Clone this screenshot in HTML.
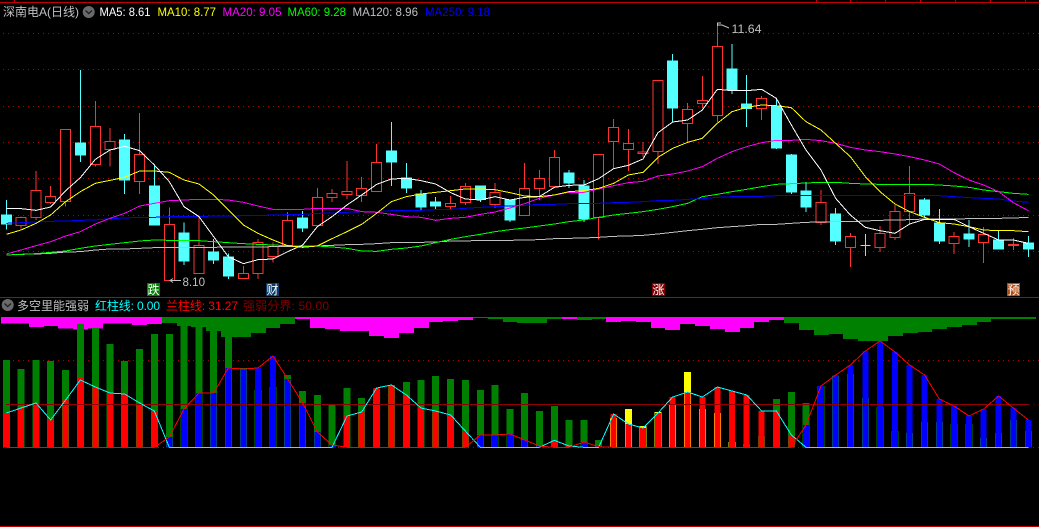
<!DOCTYPE html>
<html><head><meta charset="utf-8"><style>
html,body{margin:0;padding:0;background:#000;width:1039px;height:527px;overflow:hidden}
svg{display:block}
text{font-family:"Liberation Sans","WenQuanYi Zen Hei","Noto Sans CJK SC",sans-serif;font-size:12px}
</style></head><body>
<svg width="1039" height="527" viewBox="0 0 1039 527" xmlns="http://www.w3.org/2000/svg">
<rect width="1039" height="527" fill="#000"/>
<g shape-rendering="crispEdges">
<path d="M0 2.5H1039M0 297.5H1039M0 526.5H1039" stroke="#c00000" fill="none"/>
<path d="M14.5 0V2M816.5 0V2M850.5 0V2M885.5 0V2M920.5 0V2M955.5 0V2M990.5 0V2M1025.5 0V2" stroke="#c00000"/>
<path d="M3 33.5H1039M3 69.5H1039M3 106.5H1039M3 142.5H1039M3 178.5H1039M3 215.5H1039M3 251.5H1039M3 360.5H1039M3 447.5H1039" stroke="#b00000" stroke-dasharray="1 4" fill="none"/>
</g>
<g transform="scale(0.33333)" shape-rendering="crispEdges" stroke-width="3" fill="none">
<path stroke="#ff3232" d="M63 650V685M108 513V660M152 558V612M197 388V620M286 303V500M330 384V500M419 339V582M508 622V841M597 650V821M730 798V836M774 717V837M819 727V788M863 636V737M952 564V677M996 567V606M1041 483V597M1085 531V606M1130 432V575M1352 588V630M1396 549V615M1485 549V624M1574 489V647M1618 510V600M1663 450V559M1796 463V719M1841 357V505M1885 387V513M1929 426V470M1974 241V492M2063 309V426M2107 228V324M2152 78V366M2285 288V360M2463 570V675M2551 699V801M2640 678V756M2685 615V720M2729 498V672M2862 696V762M2951 681V789M3040 714V750"/>
<path stroke="#ff3232" fill="#000" d="M48 652h30v25h-30zM93 571h30v82h-30zM137 589h30v19h-30zM182 388h30v216h-30zM271 379h30v115h-30zM315 424h30v25h-30zM404 463h30v81h-30zM493 673h30v168h-30zM582 736h30v85h-30zM715 820h30v16h-30zM759 727h30v94h-30zM804 740h30v30h-30zM848 661h30v76h-30zM937 592h30v85h-30zM981 580h30v13h-30zM1026 574h30v10h-30zM1070 565h30v22h-30zM1115 487h30v88h-30zM1337 610h30v10h-30zM1381 559h30v49h-30zM1470 577h30v36h-30zM1559 565h30v82h-30zM1603 535h30v31h-30zM1648 472h30v87h-30zM1781 463h30v190h-30zM1826 382h30v42h-30zM1870 430h30v19h-30zM1914 456h30v4h-30zM1959 241h30v214h-30zM2048 328h30v43h-30zM2092 301h30v10h-30zM2137 139h30v208h-30zM2270 295h30v31h-30zM2448 607h30v60h-30zM2536 709h30v34h-30zM2625 700h30v43h-30zM2670 634h30v79h-30zM2714 580h30v55h-30zM2847 709h30v22h-30zM2936 703h30v25h-30zM3025 733h30v4h-30z"/>
<path stroke="#54ffff" d="M19 600V688M241 210V486M374 402V582M463 496V675M552 667V795M641 717V792M685 760V837M908 633V696M1174 366V558M1219 489V579M1263 570V633M1307 591V627M1441 558V606M1530 598V666M1707 510V564M1752 540V666M2018 162V367M2196 132V282M2240 225V381M2329 297V447M2374 462V582M2418 546V636M2507 624V735M2596 702V768M2774 594V654M2818 627V732M2907 660V741M2996 690V747M3085 708V771"/>
<path stroke="#54ffff" fill="#54ffff" d="M4 645h30v27h-30zM226 429h30v36h-30zM359 420h30v120h-30zM448 558h30v117h-30zM537 699h30v84h-30zM626 756h30v24h-30zM670 771h30v57h-30zM893 654h30v30h-30zM1159 453h30v33h-30zM1204 534h30v30h-30zM1248 582h30v39h-30zM1292 606h30v12h-30zM1426 558h30v40h-30zM1515 600h30v60h-30zM1692 519h30v30h-30zM1737 558h30v99h-30zM2003 183h30v141h-30zM2181 207h30v63h-30zM2225 312h30v14h-30zM2314 318h30v126h-30zM2359 465h30v111h-30zM2403 573h30v48h-30zM2492 642h30v81h-30zM2581 737h30M2759 600h30v45h-30zM2803 669h30v54h-30zM2892 702h30v15h-30zM2981 720h30v27h-30zM3070 729h30v18h-30z"/>
<polyline stroke="#c0c0c0" points="19,765 63,763 108,762 152,760 197,756 241,755 286,750 330,747 374,747 419,745 463,743 508,742 552,742 597,742 641,742 685,741 730,741 774,741 819,740 863,739 908,739 952,738 996,736 1041,734 1085,733 1130,731 1174,728 1219,727 1263,727 1307,726 1352,723 1396,723 1441,721 1485,721 1530,721 1574,720 1618,719 1663,716 1707,715 1752,714 1796,712 1841,709 1885,708 1929,706 1974,702 2018,697 2063,692 2107,688 2152,683 2196,680 2240,677 2285,673 2329,673 2374,670 2418,667 2463,666 2507,665 2551,665 2596,663 2640,661 2685,660 2729,659 2774,657 2818,657 2862,657 2907,656 2951,655 2996,655 3040,654 3085,652"/>
<polyline stroke="#00ff00" points="19,765 63,763 108,761 152,757 197,753 241,745 286,738 330,733 374,728 419,723 463,720 508,721 552,721 597,722 641,725 685,728 730,731 774,733 819,735 863,737 908,738 952,738 996,741 1041,745 1085,753 1130,754 1174,748 1219,744 1263,738 1307,728 1352,718 1396,710 1441,703 1485,695 1530,689 1574,684 1618,678 1663,672 1707,665 1752,660 1796,652 1841,645 1885,640 1929,635 1974,628 2018,620 2063,610 2107,590 2152,583 2196,575 2240,568 2285,560 2329,553 2374,551 2418,549 2463,547 2507,547 2551,550 2596,552 2640,553 2685,553 2729,553 2774,553 2818,555 2862,558 2907,562 2951,570 2996,575 3040,580 3085,583"/>
<polyline stroke="#0000ff" points="19,670 63,668 108,666 152,664 197,663 241,661 286,660 330,656 374,654 419,652 463,652 508,650 552,650 597,650 641,648 685,648 730,647 774,647 819,645 863,644 908,643 952,640 996,639 1041,637 1085,635 1130,635 1174,632 1219,631 1263,631 1307,629 1352,628 1396,625 1441,622 1485,620 1530,618 1574,616 1618,613 1663,613 1707,611 1752,611 1796,610 1841,608 1885,607 1929,605 1974,602 2018,601 2063,598 2107,596 2152,592 2196,590 2240,590 2285,589 2329,587 2374,587 2418,587 2463,587 2507,587 2551,587 2596,587 2640,587 2685,587 2729,587 2774,587 2818,587 2862,590 2907,593 2951,595 2996,597 3040,603 3085,607"/>
<polyline stroke="#ff00ff" points="19,762 63,750 108,737 152,725 197,708 241,695 286,672 330,655 374,640 419,618 463,610 508,602 552,600 597,598 641,598 685,600 730,607 774,618 819,628 863,628 908,628 952,625 996,625 1041,625 1085,635 1130,637 1174,643 1219,650 1263,652 1307,661 1352,655 1396,652 1441,643 1485,636 1530,624 1574,611 1618,595 1663,585 1707,577 1752,577 1796,567 1841,557 1885,548 1929,544 1974,528 2018,522 2063,513 2107,500 2152,475 2196,455 2240,440 2285,428 2329,421 2374,421 2418,418 2463,422 2507,430 2551,442 2596,450 2640,455 2685,462 2729,470 2774,480 2818,492 2862,518 2907,540 2951,555 2996,575 3040,608 3085,632"/>
<polyline stroke="#ffff00" points="19,703 63,690 108,670 152,645 197,605 241,575 286,550 330,541 374,532 419,513 463,513 508,517 552,540 597,552 641,585 685,630 730,675 774,700 819,720 863,737 908,742 952,738 996,716 1041,695 1085,673 1130,640 1174,605 1219,590 1263,582 1307,577 1352,572 1396,567 1441,567 1485,569 1530,578 1574,588 1618,590 1663,585 1707,575 1752,572 1796,565 1841,550 1885,525 1929,517 1974,472 2018,445 2063,427 2107,415 2152,370 2196,335 2240,322 2285,315 2329,317 2374,323 2418,365 2463,390 2507,430 2551,470 2596,530 2640,575 2685,612 2729,635 2774,652 2818,668 2862,672 2907,680 2951,690 2996,692 3040,692 3085,695"/>
<polyline stroke="#ffffff" points="19,625 63,626 108,631 152,621 197,572 241,533 286,478 330,450 374,439 419,452 463,495 508,545 552,620 597,650 641,710 685,770 730,791 774,779 819,777 863,755 908,735 952,680 996,650 1041,615 1085,585 1130,553 1174,537 1219,535 1263,542 1307,552 1352,578 1396,597 1441,600 1485,590 1530,600 1574,592 1618,590 1663,562 1707,556 1752,555 1796,536 1841,506 1885,496 1929,477 1974,398 2018,366 2063,360 2107,330 2152,268 2196,272 2240,272 2285,268 2329,295 2374,375 2418,450 2463,510 2507,595 2551,645 2596,682 2640,692 2685,700 2729,672 2774,658 2818,658 2862,658 2907,680 2951,700 2996,720 3040,720 3085,730"/>
</g>
<g transform="translate(0,295) scale(0.33333)" shape-rendering="crispEdges" fill="none">
<g stroke="none">
<path fill="#ff00ff" d="M3 66V85H87V96H132V93H174V100H219V104H264V100H309V85H396V90H441V87H486V66ZM885 66V72H930V99H975V102H1020V108H1107V123H1152V129H1197V114H1242V99H1287V81H1329V78H1374V75H1419V66ZM1686 66V72H1731V66ZM1818 66V81H1863V78H1908V81H1953V99H1995V105H2040V87H2085V93H2130V102H2175V111H2220V99H2262V81H2307V75H2352V66Z"/>
<path fill="#008000" d="M486 66V84H531V93H573V96H618V108H663V126H753V114H798V99H840V87H885V66ZM1419 66V69H1464V72H1509V81H1551V84H1641V72H1686V66ZM1731 66V75H1776V72H1818V66ZM2352 66V84H2397V105H2442V120H2487V117H2529V132H2574V138H2664V123H2709V114H2754V111H2796V102H2841V96H2886V90H2931V81H2973V72H3108V66Z"/>
</g>
<path stroke="#008000" stroke-width="21" d="M19 195V458M63 222V458M108 195V458M152 198V458M197 225V458M241 87V458M286 99V458M330 147V458M374 198V458M419 162V458M463 117V458M508 117V458M552 90V458M597 96V458M641 105V458M685 125V458M730 219V458M774 285V458M819 276V458M863 240V458M908 288V458M952 300V458M996 330V458M1041 279V458M1085 309V458M1130 282V458M1174 270V458M1219 261V458M1263 255V458M1307 243V458M1352 252V458M1396 255V458M1441 285V458M1485 270V458M1530 342V458M1574 294V458M1618 348V458M1663 333V458M1707 375V458M1752 375V458M1796 435V458M2240 447V458M2285 423V458M2329 312V458M2374 291V458M2418 324V458M2463 273V458M2507 243V458M2551 237V458M2596 309V458M2640 336V458M2685 408V458M2729 414V458M2774 381V458M2818 381V458M2862 387V458M2907 387V458M2951 429V458M2996 414V458M3040 375V458M3085 408V458"/>
<path stroke="#ffff00" stroke-width="21" d="M1841 369V458M1885 342V458M1929 393V458M1974 351V458M2018 330V458M2063 231V458M2107 342V458M2152 354V458M2196 441V458"/>
<path stroke="#ff0000" stroke-width="18" d="M19 354V458M63 339V458M108 324V458M152 375V458M197 315V458M241 246V458M286 276V458M330 294V458M374 297V458M419 324V458M463 348V458M1041 363V458M1085 351V458M1130 279V458M1174 270V458M1219 300V458M1263 339V458M1307 348V458M1352 360V458M1396 408V458M1663 436V458M1707 453V458M1841 357V458M1885 387V458M1929 399V458M1974 354V458M2018 306V458M2063 291V458M2107 306V458M2152 276V458M2196 288V458M2240 300V458M2285 348V458M2329 348V458M2374 420V458"/>
<path stroke="#0000ff" stroke-width="18" d="M508 426V458M552 342V458M597 294V458M641 294V458M685 219V458M730 222V458M774 219V458M819 183V458M863 252V458M908 324V458M952 411V458M996 450V458M1441 420V458M1485 420V458M1530 417V458M1574 435V458M1618 453V458M1752 441V458M1796 455V458M2418 390V458M2463 273V458M2507 240V458M2551 210V458M2596 168V458M2640 138V458M2685 171V458M2729 210V458M2774 240V458M2818 312V458M2862 333V458M2907 363V458M2951 342V458M2996 303V458M3040 339V458M3085 375V458"/>
<path stroke="#900000" stroke-width="3" d="M18 328.5H3085"/>
<path stroke="#800000" stroke-width="3" stroke-dasharray="3 12" d="M3085 328.5H3117"/>
<polyline stroke="#00ffff" stroke-width="3" points="19,354 63,339 108,324 152,375 197,315 241,255 286,276 330,294 374,297 419,324 463,348 508,457 552,457 597,457 641,457 685,457 730,457 774,457 819,457 863,457 908,457 952,457 996,457 1041,363 1085,351 1130,279 1174,270 1219,300 1263,339 1307,348 1352,360 1396,408 1441,457 1485,457 1530,457 1574,457 1618,457 1663,436 1707,453 1752,457 1796,457 1841,357 1885,387 1929,399 1974,354 2018,306 2063,291 2107,306 2152,276 2196,288 2240,300 2285,348 2329,348 2374,420 2418,457 2463,457 2507,457 2551,457 2596,457 2640,457 2685,457 2729,457 2774,457 2818,457 2862,457 2907,457 2951,457 2996,457 3040,457 3085,457"/>
<polyline stroke="#ff0000" stroke-width="3" points="19,457 63,457 108,457 152,457 197,457 241,457 286,457 330,457 374,457 419,457 463,457 508,426 552,342 597,294 641,294 685,219 730,222 774,219 819,183 863,252 908,324 952,411 996,450 1041,457 1085,457 1130,457 1174,457 1219,457 1263,457 1307,457 1352,457 1396,457 1441,420 1485,420 1530,417 1574,435 1618,453 1663,457 1707,457 1752,441 1796,455 1841,457 1885,457 1929,457 1974,457 2018,457 2063,457 2107,457 2152,457 2196,457 2240,457 2285,457 2329,457 2374,457 2418,390 2463,273 2507,240 2551,210 2596,168 2640,138 2685,171 2729,210 2774,240 2818,312 2862,333 2907,363 2951,342 2996,303 3040,339 3085,375"/>
</g>
<text x="3" y="16" fill="#c0c0c0">深南电A(日线)</text>
<circle cx="88.7" cy="12" r="6" fill="#6a6a6a"/>
<path d="M85.5 10.5L88.7 13.5L92 10.5" stroke="#222" stroke-width="1.4" fill="none"/>
<text x="99.5" y="16" fill="#ffffff" textLength="51" lengthAdjust="spacingAndGlyphs">MA5: 8.61</text>
<text x="157.5" y="16" fill="#ffff00" textLength="58.5" lengthAdjust="spacingAndGlyphs">MA10: 8.77</text>
<text x="222.5" y="16" fill="#ff00ff" textLength="59" lengthAdjust="spacingAndGlyphs">MA20: 9.05</text>
<text x="287.5" y="16" fill="#00ff00" textLength="58.5" lengthAdjust="spacingAndGlyphs">MA60: 9.28</text>
<text x="352.5" y="16" fill="#c0c0c0" textLength="65.5" lengthAdjust="spacingAndGlyphs">MA120: 8.96</text>
<text x="425" y="16" fill="#0000ff" textLength="65" lengthAdjust="spacingAndGlyphs">MA250: 9.18</text>
<path d="M170 280.5H181M173 278.5L170 280.5L173 282.5" stroke="#c0c0c0" fill="none"/>
<text x="182.5" y="286" fill="#c0c0c0" textLength="22.5" lengthAdjust="spacingAndGlyphs">8.10</text>
<path d="M717.5 26V23H721M717.5 25H722L729 28" stroke="#c0c0c0" fill="none"/>
<text x="731.5" y="33" fill="#c0c0c0" textLength="30" lengthAdjust="spacingAndGlyphs">11.64</text>
<rect x="147" y="283" width="13" height="13" fill="#008000"/>
<text x="147.5" y="294" fill="#fff">跌</text>
<rect x="266" y="283" width="13" height="13" fill="#0a3a6a"/>
<text x="266.5" y="294" fill="#fff">财</text>
<rect x="652" y="283" width="13" height="13" fill="#800000"/>
<text x="652.5" y="294" fill="#fff">涨</text>
<rect x="1007" y="283" width="13" height="13" fill="#b34b10"/>
<text x="1007.5" y="294" fill="#fff">预</text>
<circle cx="7.7" cy="305" r="6" fill="#6a6a6a"/>
<path d="M4.5 303.5L7.7 306.5L11 303.5" stroke="#222" stroke-width="1.4" fill="none"/>
<text x="17" y="310" fill="#c0c0c0">多空里能强弱</text>
<text x="95" y="310" fill="#00ffff" textLength="65">红柱线: 0.00</text>
<text x="166" y="310" fill="#ff0000" textLength="72">兰柱线: 31.27</text>
<text x="243" y="310" fill="#800000" textLength="86">强弱分界: 50.00</text>
</svg>
</body></html>
